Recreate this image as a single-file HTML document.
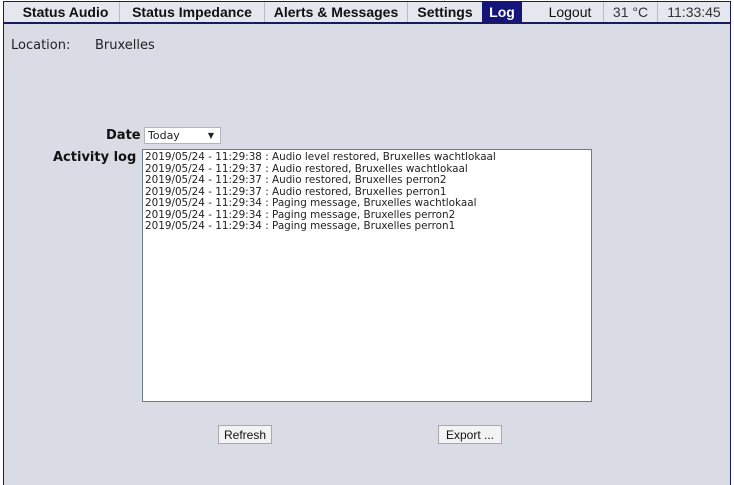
<!DOCTYPE html>
<html><head><style>
body{margin:0;width:734px;height:484px;background:#fff;position:relative;overflow:hidden;font-family:"DejaVu Sans","Liberation Sans",sans-serif;}
.frame{position:absolute;left:3px;top:1px;width:726px;height:483px;border:1px solid #1a1a5e;border-bottom:none;background:#d9dce4;}
.bar{position:absolute;left:0;top:0;width:726px;height:20px;background:#e4e7ee;border-bottom:2px solid #1a1a5e;}
.t{position:absolute;top:0;height:20px;line-height:20px;font-family:"Liberation Sans",sans-serif;font-size:14px;font-weight:bold;color:#111;text-align:center;border-right:1px solid #b8bcc6}
.n{font-weight:normal}
.lbl{position:absolute;font-size:13px;color:#222}
.b{position:absolute;font-size:13px;font-weight:bold;color:#111}
.ta{position:absolute;left:138px;top:147px;width:450px;height:253px;background:#fff;border:1px solid #6a7a90;font-family:"DejaVu Sans",sans-serif;font-size:10.4px;line-height:11.5px;color:#222;padding:2px 2px;box-sizing:border-box;white-space:pre}
.btn{position:absolute;height:19px;background:#f3f3f3;border:1px solid #a8a8a8;font-family:"Liberation Sans",sans-serif;font-size:12px;line-height:19px;text-align:center;color:#111;box-sizing:border-box}
</style></head><body>
<div class="frame">
<div class="bar">
<div class="t" style="left:8px;width:107px">Status Audio</div>
<div class="t" style="left:116px;width:144px">Status Impedance</div>
<div class="t" style="left:261px;width:142px">Alerts &amp; Messages</div>
<div class="t" style="left:404px;width:74px">Settings</div>
<div class="t" style="left:478px;width:40px;background:#14147a;color:#fff;border:none">Log</div>
<div class="t" style="left:533px;width:66px;font-weight:normal">Logout</div>
<div class="t n" style="left:600px;width:53px;color:#333">31 °C</div>
<div class="t n" style="left:654px;width:72px;color:#333;border:none">11:33:45</div>
</div>
<div class="lbl" style="left:7px;top:36px">Location:</div>
<div class="lbl" style="left:91px;top:36px">Bruxelles</div>
<div class="b" style="left:102px;top:126px">Date</div>
<div style="position:absolute;left:140px;top:125px;width:77px;height:17px;background:#fff;border:1px solid #b0b4bc;box-sizing:border-box;font-size:11px;line-height:16px;padding-left:3px;color:#222">Today<span style="position:absolute;right:6px;font-size:8px">▼</span></div>
<div class="b" style="left:49px;top:148px">Activity log</div>
<div class="ta">2019/05/24 - 11:29:38 : Audio level restored, Bruxelles wachtlokaal
2019/05/24 - 11:29:37 : Audio restored, Bruxelles wachtlokaal
2019/05/24 - 11:29:37 : Audio restored, Bruxelles perron2
2019/05/24 - 11:29:37 : Audio restored, Bruxelles perron1
2019/05/24 - 11:29:34 : Paging message, Bruxelles wachtlokaal
2019/05/24 - 11:29:34 : Paging message, Bruxelles perron2
2019/05/24 - 11:29:34 : Paging message, Bruxelles perron1</div>
<div class="btn" style="left:214px;top:423px;width:54px">Refresh</div>
<div class="btn" style="left:434px;top:423px;width:64px">Export ...</div>
</div>
</body></html>
